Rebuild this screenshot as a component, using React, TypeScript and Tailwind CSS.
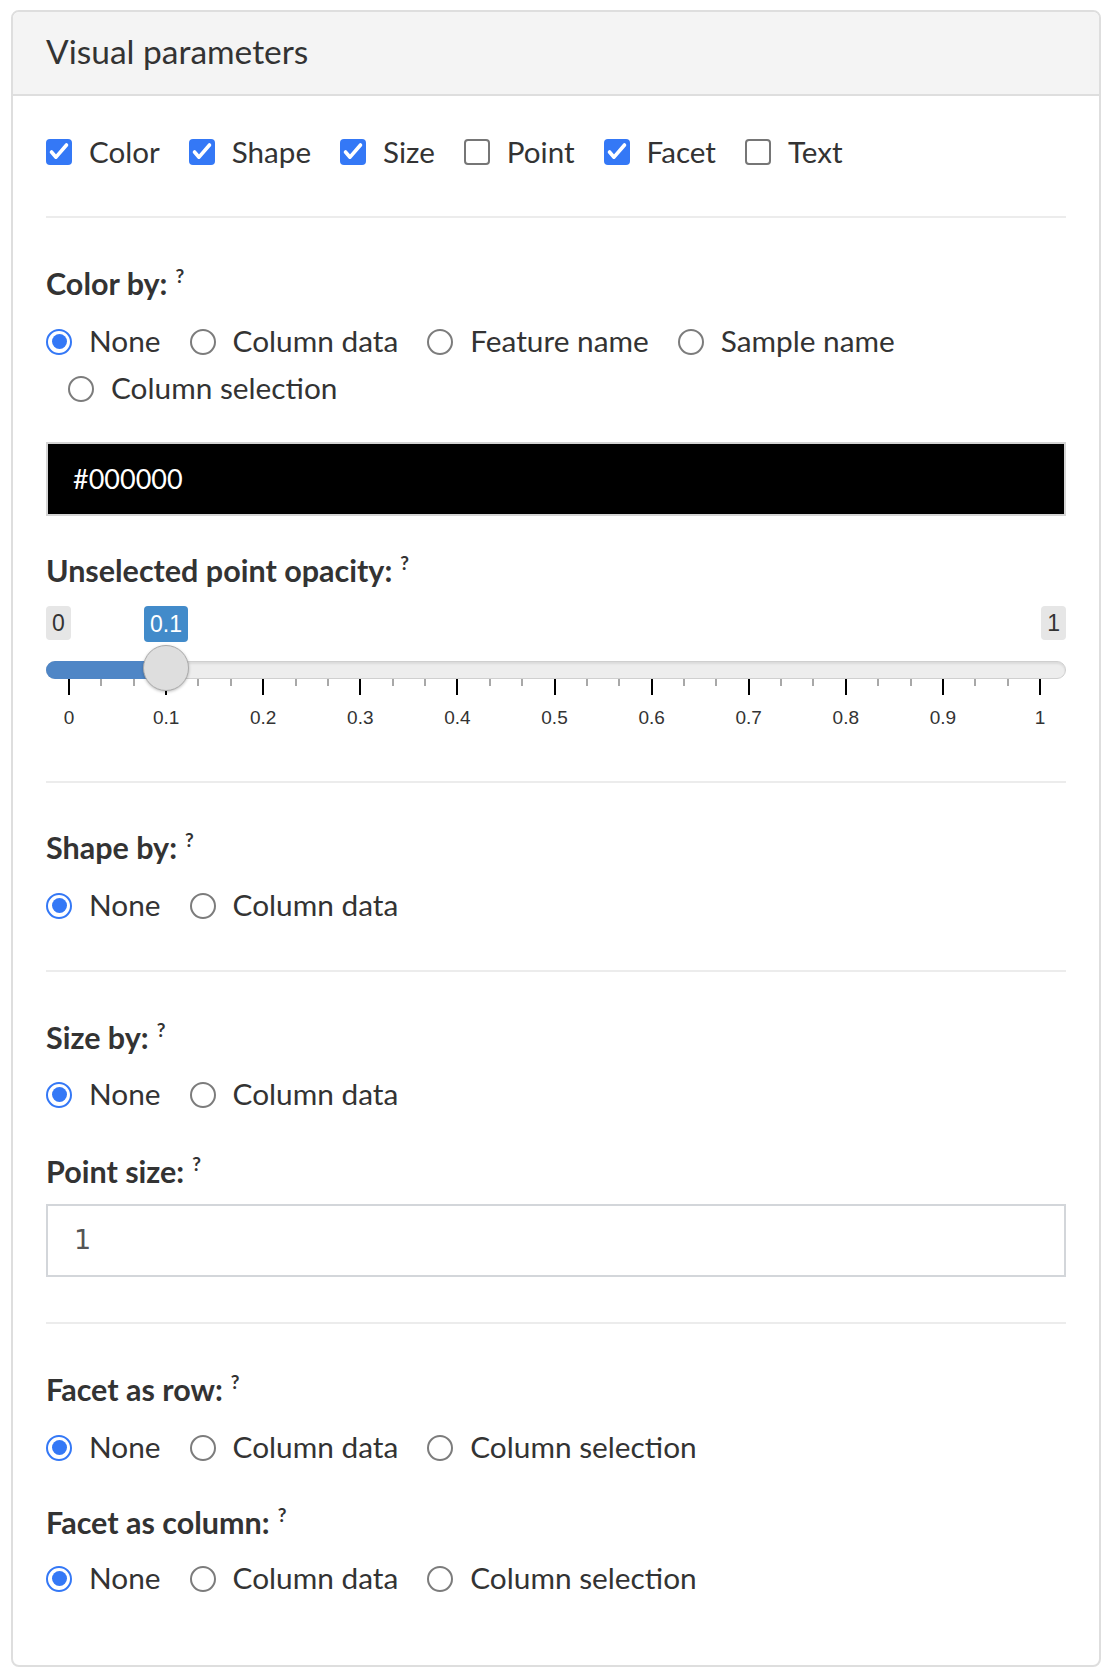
import React from "react";

type Opt = { label: string; checked?: boolean };

function CheckBox({ checked }: { checked?: boolean }) {
  if (!checked) {
    return <span className="h-[26px] w-[26px] shrink-0 rounded-[4px] border-2 border-[#767676] bg-white" />;
  }
  return (
    <span className="flex h-[26px] w-[26px] shrink-0 items-center justify-center rounded-[4px] bg-[#3478f6]">
      <svg viewBox="0 0 26 26" className="h-[26px] w-[26px]" fill="none" stroke="#ffffff" strokeWidth="3.6" strokeLinecap="round" strokeLinejoin="round">
        <path d="M5.5 13l4.5 5.2L20.5 6" />
      </svg>
    </span>
  );
}

function RadioDot({ checked }: { checked?: boolean }) {
  if (!checked) {
    return <span className="h-[26px] w-[26px] shrink-0 rounded-full border-2 border-[#7c7c7c] bg-white" />;
  }
  return (
    <span className="flex h-[26px] w-[26px] shrink-0 items-center justify-center rounded-full border-2 border-[#3478f6] bg-white">
      <span className="h-[15px] w-[15px] rounded-full bg-[#3478f6]" />
    </span>
  );
}

function Label({ text }: { text: string }) {
  return (
    <div className="flex h-[36px] items-center text-[30.5px] font-bold text-[#333333]">
      <span>{text}</span>
      <span className="relative -top-[8px] ml-[8px] text-[19px] font-bold">?</span>
    </div>
  );
}

function RadioGroup({ options }: { options: Opt[] }) {
  return (
    <div className="flex flex-wrap">
      {options.map((o, i) => (
        <label
          key={o.label}
          className={`flex h-[47px] items-center gap-[17px] pr-[7px] ${i === 0 ? "" : "ml-[22px]"}`}
        >
          <RadioDot checked={o.checked} />
          <span className="text-[29.8px] text-[#333333]">{o.label}</span>
        </label>
      ))}
    </div>
  );
}

function Divider({ className }: { className: string }) {
  return <div className={`h-[2px] bg-[#ececec] ${className}`} />;
}

function OpacitySlider() {
  // 31 tick marks between 0 and 1, every third is labelled
  const ticks = Array.from({ length: 31 }, (_, i) => i);
  const left = 23;
  const span = 971;
  return (
    <div className="relative mt-[1px] h-[140px] font-['Liberation_Sans',Arial,sans-serif] text-[#333333]">
      <span className="absolute left-0 top-[16px] flex h-[34px] items-center rounded-[4px] bg-[#e6e6e6] px-[6px] text-[23px]">
        0
      </span>
      <span className="absolute left-[98px] top-[16px] flex h-[36px] items-center rounded-[4px] bg-[#428bca] px-[6px] text-[23px] text-white">
        0.1
      </span>
      <span className="absolute right-0 top-[16px] flex h-[34px] items-center rounded-[4px] bg-[#e6e6e6] px-[6px] text-[23px]">
        1
      </span>

      <div className="absolute left-0 right-0 top-[71px] h-[18px] rounded-full border border-[#cfcfcf] bg-[#ededed] shadow-[inset_0_2px_2px_rgba(0,0,0,0.08)]" />
      <div className="absolute left-0 top-[71px] h-[18px] w-[120px] rounded-l-full bg-[#4f86c6]" />

      {ticks.map((i) => {
        const major = i % 3 === 0;
        const x = left + (i * span) / 30;
        return (
          <span
            key={i}
            className={`absolute top-[89px] w-[2px] ${major ? "h-[16px] bg-black" : "h-[7px] bg-[#a8a8a8]"}`}
            style={{ left: x - 1 }}
          />
        );
      })}
      {ticks
        .filter((i) => i % 3 === 0)
        .map((i) => {
          const x = left + (i * span) / 30;
          const v = i / 30;
          const txt = v === 0 ? "0" : v === 1 ? "1" : v.toFixed(1);
          return (
            <span
              key={`l${i}`}
              className="absolute top-[116px] w-[50px] text-center text-[19px] leading-[24px]"
              style={{ left: x - 25 }}
            >
              {txt}
            </span>
          );
        })}

      <span className="absolute left-[97px] top-[55px] h-[46px] w-[46px] rounded-full border border-[#ababab] bg-[#dedede] shadow-[0_1px_3px_rgba(0,0,0,0.25)]" />
    </div>
  );
}

export default function App() {
  const checks: Opt[] = [
    { label: "Color", checked: true },
    { label: "Shape", checked: true },
    { label: "Size", checked: true },
    { label: "Point" },
    { label: "Facet", checked: true },
    { label: "Text" },
  ];

  return (
    <div className="min-h-screen bg-white pl-[11px] pt-[10px] font-['Lato','Noto_Sans',sans-serif] text-[#333333]">
      <div className="w-[1090px] overflow-hidden rounded-[8px] border-2 border-[#dedede] bg-white">
        {/* Header */}
        <div className="flex h-[84px] items-center border-b-2 border-[#dedede] bg-[#f4f4f4] px-[33px] pb-[4px] text-[33.5px]">
          Visual parameters
        </div>

        <div className="px-[33px] pb-[63px] pt-[33px]">
          {/* Toggles */}
          <div className="flex h-[46px] items-center gap-x-[29px]">
            {checks.map((c) => (
              <label key={c.label} className="flex items-center gap-[17px]">
                <CheckBox checked={c.checked} />
                <span className="text-[29.6px]">{c.label}</span>
              </label>
            ))}
          </div>

          <Divider className="mt-[41px]" />

          {/* Color */}
          <div className="mt-[48px]">
            <Label text="Color by:" />
          </div>
          <div className="mt-[16px]">
            <RadioGroup
              options={[
                { label: "None", checked: true },
                { label: "Column data" },
                { label: "Feature name" },
                { label: "Sample name" },
                { label: "Column selection" },
              ]}
            />
          </div>
          <div className="mt-[30px] flex h-[74px] items-center border-2 border-[#d4d4d4] bg-black px-[25px] text-[27px] text-white">
            #000000
          </div>

          <div className="mt-[37px]">
            <Label text="Unselected point opacity:" />
          </div>
          <OpacitySlider />

          <Divider className="mt-[51px]" />

          {/* Shape */}
          <div className="mt-[47px]">
            <Label text="Shape by:" />
          </div>
          <div className="mt-[16px]">
            <RadioGroup options={[{ label: "None", checked: true }, { label: "Column data" }]} />
          </div>

          <Divider className="mt-[41px]" />

          {/* Size */}
          <div className="mt-[48px]">
            <Label text="Size by:" />
          </div>
          <div className="mt-[15px]">
            <RadioGroup options={[{ label: "None", checked: true }, { label: "Column data" }]} />
          </div>
          <div className="mt-[36px]">
            <Label text="Point size:" />
          </div>
          <div className="mt-[14px] flex h-[73px] items-center border-2 border-[#d3d6da] bg-white px-[26px] font-['DejaVu_Sans',sans-serif] text-[27px] text-[#555555]">
            1
          </div>

          <Divider className="mt-[45px]" />

          {/* Facets */}
          <div className="mt-[48px]">
            <Label text="Facet as row:" />
          </div>
          <div className="mt-[16px]">
            <RadioGroup
              options={[{ label: "None", checked: true }, { label: "Column data" }, { label: "Column selection" }]}
            />
          </div>
          <div className="mt-[34px]">
            <Label text="Facet as column:" />
          </div>
          <div className="mt-[14px]">
            <RadioGroup
              options={[{ label: "None", checked: true }, { label: "Column data" }, { label: "Column selection" }]}
            />
          </div>
        </div>
      </div>
    </div>
  );
}
